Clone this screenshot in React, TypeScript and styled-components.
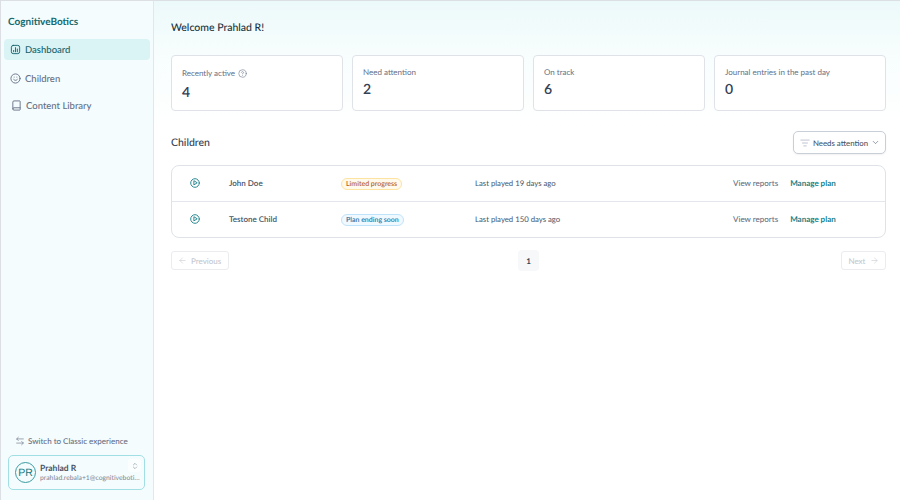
import React from "react";
import styled, { createGlobalStyle } from "styled-components";
import {
  Smile,
  Book,
  CircleHelp,
  ArrowLeftRight,
  ChevronsUpDown,
  ListFilter,
  ChevronDown,
  ArrowLeft,
  ArrowRight,
} from "lucide-react";

const Global = createGlobalStyle`
  html, body { margin: 0; padding: 0; height: 100%; background: #fff; }
  #root { height: 100%; }
  * { box-sizing: border-box; }
  body {
    font-family: "Lato", "Noto Sans", sans-serif;
    text-rendering: geometricPrecision;
  }
  svg { flex: none; }
`;

const Page = styled.div`
  width: 900px;
  height: 500px;
  display: flex;
  overflow: hidden;
  background: #fff;
  border-top: 1px solid #dcdfe3;
  border-left: 1px solid #dcdfe3;
`;

const Sidebar = styled.aside`
  width: 153px;
  flex: none;
  display: flex;
  flex-direction: column;
  background: #f4fcfd;
  border-right: 1px solid #d3eef1;
  padding: 0 3px 0 3px;
`;

const Brand = styled.div`
  font-size: 10px;
  font-weight: 700;
  color: #126a70;
  height: 20px;
  line-height: 20px;
  margin: 11px 0 7px 4px;
`;

const NavItem = styled.div<{ $active?: boolean; $inset?: number }>`
  height: 21px;
  display: flex;
  align-items: center;
  gap: 4px;
  padding-left: ${(p) => p.$inset ?? 6}px;
  border-radius: 4px;
  margin-bottom: ${(p) => (p.$active ? "8px" : "6px")};
  background: ${(p) => (p.$active ? "#daf3f5" : "transparent")};
  color: ${(p) => (p.$active ? "#15636b" : "#667085")};
  font-size: 9.5px;
  font-weight: 500;
`;

const NavLabel = styled.span`
  padding-top: 2px;
`;

const Spacer = styled.div`
  flex: 1;
`;

const SwitchRow = styled.div`
  display: flex;
  align-items: center;
  gap: 3px;
  padding-left: 11px;
  font-size: 8px;
  font-weight: 500;
  color: #667085;
  height: 14px;
  margin-bottom: 7px;
`;

const UserCard = styled.div`
  height: 35px;
  margin: 0 5px 10px 4px;
  border: 1px solid #a2dfe5;
  border-radius: 5px;
  display: flex;
  align-items: center;
  gap: 4px;
  padding: 0 3px 0 6px;
  position: relative;
`;

const Avatar = styled.div`
  width: 21px;
  height: 21px;
  flex: none;
  border-radius: 50%;
  border: 1px solid #3b9ca3;
  display: flex;
  align-items: center;
  justify-content: center;
  font-family: "Liberation Sans", sans-serif;
  font-size: 10.5px;
  color: #14777e;
`;

const UserText = styled.div`
  min-width: 0;
  flex: 1;
`;

const UserName = styled.div`
  font-size: 8.5px;
  font-weight: 700;
  color: #475467;
  line-height: 11px;
`;

const UserMail = styled.div`
  font-size: 6.8px;
  color: #7b8595;
  line-height: 9px;
  white-space: nowrap;
  overflow: hidden;
  text-overflow: ellipsis;
`;

const UserToggle = styled.div`
  position: absolute;
  right: 3px;
  top: 3px;
  width: 13px;
  height: 13px;
  border-radius: 3px;
  background: #fbfefe;
  display: flex;
  align-items: center;
  justify-content: center;
  color: #667085;
`;

const Main = styled.main`
  flex: 1;
  min-width: 0;
  display: flex;
  flex-direction: column;
  padding: 0 14px 0 17px;
  background: linear-gradient(180deg, #ecf9fa 0, #f7fdfd 50px, #ffffff 125px);
`;

const Title = styled.h1`
  margin: 19px 0 0;
  font-size: 10.5px;
  line-height: 17px;
  font-weight: 500;
  color: #1b3340;
`;

const Cards = styled.div`
  display: grid;
  grid-template-columns: repeat(4, 1fr);
  gap: 9px;
  margin-top: 18px;
`;

const Card = styled.div`
  height: 56px;
  background: #fff;
  border: 1px solid #dfe3e8;
  border-radius: 4px;
  padding: 10px 10px;
`;

const CardLabel = styled.div<{ $tall?: boolean }>`
  display: flex;
  align-items: center;
  gap: 3px;
  font-size: 8px;
  line-height: 12px;
  min-height: ${(p) => (p.$tall ? "14px" : "12px")};
  color: #667085;
`;

const CardValue = styled.div<{ $tall?: boolean }>`
  margin-top: ${(p) => (p.$tall ? "3px" : "2px")};
  font-size: 14px;
  line-height: 18px;
  font-weight: 600;
  color: #344054;
`;

const SectionHead = styled.div`
  display: flex;
  align-items: center;
  justify-content: space-between;
  margin-top: 20px;
`;

const SectionTitle = styled.h2`
  margin: 0;
  font-size: 10.5px;
  font-weight: 500;
  color: #344054;
`;

const FilterButton = styled.button`
  width: 93px;
  height: 23px;
  background: #fff;
  border: 1px solid #c9ced8;
  border-radius: 5px;
  display: flex;
  align-items: center;
  padding: 0 5px 0 6px;
  font-family: inherit;
  font-size: 7.8px;
  font-weight: 500;
  color: #475467;
  gap: 3px;
  white-space: nowrap;
  text-rendering: geometricPrecision;
  box-shadow: 0 1px 2px rgba(16, 24, 40, 0.06);
`;

const FilterLabel = styled.span`
  flex: 1;
  text-align: left;
`;

const Table = styled.div`
  margin-top: 11px;
  border: 1px solid #dfe3e8;
  border-radius: 8px;
  background: #fff;
`;

const Row = styled.div`
  height: 35px;
  padding-bottom: 1px;
  display: flex;
  align-items: center;
  & + & {
    height: 36px;
    border-top: 1px solid #e3e6ea;
  }
`;

const PlayCell = styled.div`
  width: 57px;
  padding-left: 18px;
  flex: none;
  display: flex;
  align-items: center;
  color: #2b8a92;
`;

const NameCell = styled.div`
  width: 112px;
  flex: none;
  font-size: 8px;
  font-weight: 600;
  color: #475467;
`;

const BadgeCell = styled.div`
  width: 134px;
  flex: none;
  display: flex;
  align-items: center;
  padding-top: 2px;
`;

const Badge = styled.span<{ $tone: "warn" | "info" }>`
  height: 12px;
  line-height: 10px;
  padding: 0 4px;
  border-radius: 6px;
  font-size: 7px;
  font-weight: 600;
  border: 1px solid ${(p) => (p.$tone === "warn" ? "#fde3a0" : "#bfe3fa")};
  background: ${(p) => (p.$tone === "warn" ? "#fffaeb" : "#f0f9ff")};
  color: ${(p) => (p.$tone === "warn" ? "#b9621d" : "#1b76a8")};
`;

const PlayedCell = styled.div`
  flex: 1;
  font-size: 7.75px;
  color: #475467;
`;

const LinkCell = styled.div`
  width: 152px;
  flex: none;
  display: flex;
  gap: 12px;
  font-size: 8px;
  font-weight: 500;
`;

const ViewLink = styled.span`
  color: #667085;
`;

const ManageLink = styled.span`
  color: #1a7f87;
  font-weight: 700;
`;

const Pager = styled.div`
  margin-top: 12px;
  display: grid;
  grid-template-columns: 1fr auto 1fr;
  align-items: center;
`;

const PagerButton = styled.button<{ $end?: boolean }>`
  height: 19px;
  padding: 0 6.5px 0 6px;
  display: flex;
  align-items: center;
  gap: 4px;
  justify-self: ${(p) => (p.$end ? "end" : "start")};
  background: #fff;
  border: 1px solid #eaecf0;
  border-radius: 3px;
  font-family: inherit;
  font-size: 8px;
  font-weight: 500;
  color: #c4c8cf;
  text-rendering: geometricPrecision;
`;

const PageNumber = styled.div`
  width: 21px;
  height: 21px;
  display: flex;
  align-items: center;
  justify-content: center;
  background: #f7f8f9;
  border-radius: 4px;
  font-size: 8px;
  font-weight: 700;
  color: #344054;
`;

const DashboardIcon = () => (
  <svg width="11" height="11" viewBox="0 0 24 24" fill="none" stroke="currentColor" strokeWidth="2" strokeLinecap="round" strokeLinejoin="round">
    <rect x="3" y="3" width="18" height="18" rx="4" />
    <path d="M8 17v-3M12 17V8M16 17v-6" />
  </svg>
);

const PlayIcon = () => (
  <svg width="10" height="10" viewBox="0 0 20 20" fill="none" stroke="currentColor" strokeWidth="2" strokeLinecap="round" strokeLinejoin="round">
    <circle cx="10" cy="10" r="8.6" />
    <path d="M7.8 6.2v7.6l6-3.8z" />
  </svg>
);

const children = [
  { name: "John Doe", badge: "Limited progress", tone: "warn" as const, played: "Last played 19 days ago" },
  { name: "Testone Child", badge: "Plan ending soon", tone: "info" as const, played: "Last played 150 days ago" },
];

const stats = [
  { label: "Recently active", value: "4", help: true },
  { label: "Need attention", value: "2" },
  { label: "On track", value: "6" },
  { label: "Journal entries in the past day", value: "0" },
];

export default function App() {
  return (
    <>
      <Global />
      <Page>
        <Sidebar>
          <Brand>CognitiveBotics</Brand>
          <NavItem $active>
            <DashboardIcon />
            <NavLabel>Dashboard</NavLabel>
          </NavItem>
          <NavItem>
            <Smile size={11} strokeWidth={2} />
            <NavLabel>Children</NavLabel>
          </NavItem>
          <NavItem $inset={7}>
            <Book size={11} strokeWidth={2} />
            <NavLabel>Content Library</NavLabel>
          </NavItem>
          <Spacer />
          <SwitchRow>
            <ArrowLeftRight size={10} strokeWidth={1.5} />
            Switch to Classic experience
          </SwitchRow>
          <UserCard>
            <Avatar>PR</Avatar>
            <UserText>
              <UserName>Prahlad R</UserName>
              <UserMail>prahlad.rebala+1@cognitivebotics.com</UserMail>
            </UserText>
            <UserToggle>
              <ChevronsUpDown size={8} strokeWidth={1.5} />
            </UserToggle>
          </UserCard>
        </Sidebar>
        <Main>
          <Title>Welcome Prahlad R!</Title>
          <Cards>
            {stats.map((s) => (
              <Card key={s.label}>
                <CardLabel $tall={s.help}>
                  {s.label}
                  {s.help && <CircleHelp size={9} strokeWidth={1.5} />}
                </CardLabel>
                <CardValue $tall={s.help}>{s.value}</CardValue>
              </Card>
            ))}
          </Cards>
          <SectionHead>
            <SectionTitle>Children</SectionTitle>
            <FilterButton>
              <ListFilter size={10} strokeWidth={1.5} color="#98a2b3" />
              <FilterLabel>Needs attention</FilterLabel>
              <ChevronDown size={9} strokeWidth={1.5} />
            </FilterButton>
          </SectionHead>
          <Table>
            {children.map((c) => (
              <Row key={c.name}>
                <PlayCell>
                  <PlayIcon />
                </PlayCell>
                <NameCell>{c.name}</NameCell>
                <BadgeCell>
                  <Badge $tone={c.tone}>{c.badge}</Badge>
                </BadgeCell>
                <PlayedCell>{c.played}</PlayedCell>
                <LinkCell>
                  <ViewLink>View reports</ViewLink>
                  <ManageLink>Manage plan</ManageLink>
                </LinkCell>
              </Row>
            ))}
          </Table>
          <Pager>
            <PagerButton>
              <ArrowLeft size={9} strokeWidth={1.5} />
              Previous
            </PagerButton>
            <PageNumber>1</PageNumber>
            <PagerButton $end>
              Next
              <ArrowRight size={9} strokeWidth={1.5} />
            </PagerButton>
          </Pager>
        </Main>
      </Page>
    </>
  );
}
